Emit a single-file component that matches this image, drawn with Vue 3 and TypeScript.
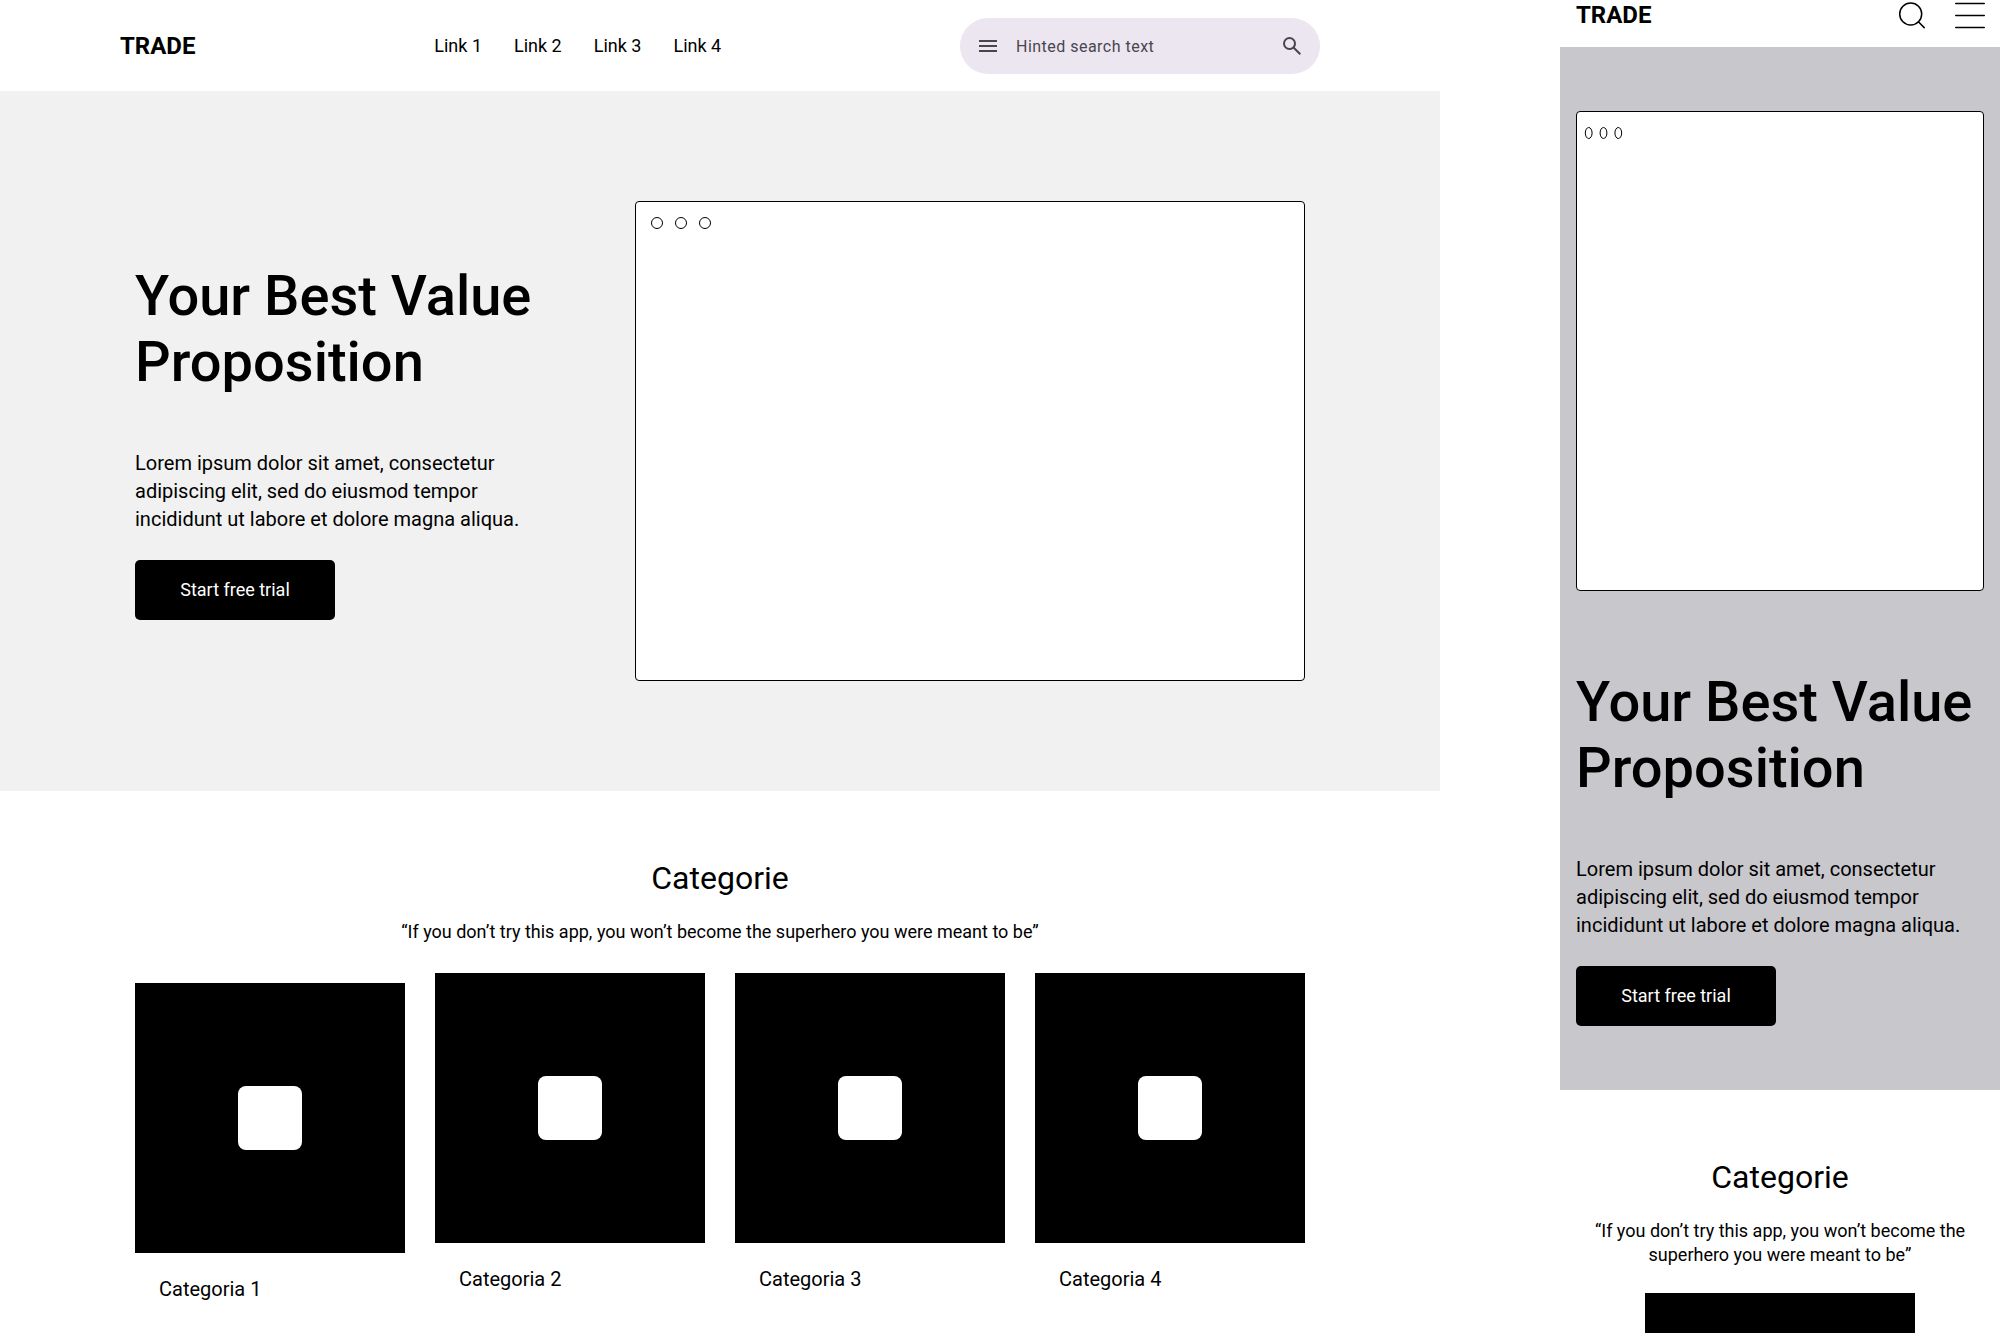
<script setup lang="ts">
interface NavLink {
  label: string
  href: string
}

const links: NavLink[] = [1, 2, 3, 4].map((n) => ({ label: `Link ${n}`, href: `#link-${n}` }))
const categories: string[] = [1, 2, 3, 4].map((n) => `Categoria ${n}`)
const title = 'Your Best Value Proposition'
const lead =
  'Lorem ipsum dolor sit amet, consectetur adipiscing elit, sed do eiusmod tempor incididunt ut labore et dolore magna aliqua.'
const quote = '“If you don’t try this app, you won’t become the superhero you were meant to be”'
</script>

<template>
  <div class="canvas">
    <main class="board desktop">
      <header class="nav">
        <a class="logo" href="#home">TRADE</a>
        <nav class="links">
          <a v-for="link in links" :key="link.label" :href="link.href">{{ link.label }}</a>
        </nav>
        <form class="search" role="search" @submit.prevent>
          <button class="icon-button" type="button" aria-label="Menu">
            <svg width="24" height="24" viewBox="0 0 24 24" fill="currentColor">
              <path d="M3 18h18v-2H3v2zm0-5h18v-2H3v2zm0-7v2h18V6H3z" />
            </svg>
          </button>
          <input type="text" placeholder="Hinted search text" aria-label="Search" />
          <button class="icon-button" type="submit" aria-label="Search">
            <svg width="24" height="24" viewBox="0 0 24 24" fill="currentColor">
              <path
                d="M19.6 21l-6.3-6.3A6.1 6.1 0 0 1 9.5 16 6.5 6.5 0 1 1 16 9.5a6.1 6.1 0 0 1-1.3 3.8l6.3 6.3-1.4 1.4zM9.5 14a4.5 4.5 0 1 0 0-9 4.5 4.5 0 0 0 0 9z"
              />
            </svg>
          </button>
        </form>
      </header>

      <section class="hero">
        <div class="pitch">
          <h1>{{ title }}</h1>
          <p>{{ lead }}</p>
          <button class="cta" type="button">Start free trial</button>
        </div>
        <div class="window">
          <svg class="dots" viewBox="0 0 60 12" preserveAspectRatio="none">
            <circle v-for="cx in [6, 30, 54]" :key="cx" :cx="cx" cy="6" r="5.5" />
          </svg>
        </div>
      </section>

      <section class="categories">
        <h2>Categorie</h2>
        <p class="quote">{{ quote }}</p>
        <ul class="cards">
          <li v-for="name in categories" :key="name" class="card">
            <div class="tile"><span class="chip"></span></div>
            <h3>{{ name }}</h3>
          </li>
        </ul>
      </section>
    </main>

    <aside class="board mobile">
      <header class="nav">
        <a class="logo" href="#home">TRADE</a>
        <div class="actions">
          <button class="icon-button" type="button" aria-label="Search">
            <svg width="30" height="30" viewBox="0 0 30 30" fill="none" stroke="currentColor" stroke-width="1.5">
              <circle cx="13.7" cy="14" r="11" />
              <path d="M21.4 21.8l5.8 5.8" stroke-linecap="round" />
            </svg>
          </button>
          <button class="icon-button" type="button" aria-label="Menu">
            <svg width="30" height="30" viewBox="0 0 30 30" fill="none" stroke="currentColor" stroke-width="1.5">
              <path d="M.75 3.5h28.5M.75 15.5h28.5M.75 27.5h28.5" stroke-linecap="round" />
            </svg>
          </button>
        </div>
      </header>

      <section class="hero">
        <div class="window">
          <svg class="dots" viewBox="0 0 60 12" preserveAspectRatio="none">
            <circle v-for="cx in [6, 30, 54]" :key="cx" :cx="cx" cy="6" r="5.5" />
          </svg>
        </div>
        <div class="pitch">
          <h1>{{ title }}</h1>
          <p>{{ lead }}</p>
          <button class="cta" type="button">Start free trial</button>
        </div>
      </section>

      <section class="categories">
        <h2>Categorie</h2>
        <p class="quote">{{ quote }}</p>
        <div class="tile"><span class="chip"></span></div>
      </section>
    </aside>
  </div>
</template>

<style>
body {
  margin: 0;
  background: #fff;
}
</style>

<style scoped>
.canvas {
  display: grid;
  grid-template-columns: minmax(0, 1fr) 440px;
  gap: 120px;
  height: 100vh;
  overflow: hidden;
  color: #000;
  font-family: Roboto, sans-serif;
  font-size: 18px;
  line-height: 24px;
}
.canvas * {
  box-sizing: border-box;
}
h1,
h2,
h3,
p,
ul {
  margin: 0;
  padding: 0;
  font-weight: 400;
}
a {
  color: inherit;
  text-decoration: none;
}
button {
  padding: 0;
  border: 0;
  font: inherit;
  cursor: pointer;
}
svg {
  display: block;
}
.nav {
  display: flex;
  align-items: center;
  justify-content: space-between;
}
.logo {
  font-size: 24px;
  font-weight: 700;
  line-height: 28px;
}
.icon-button {
  flex: none;
  background: none;
  color: inherit;
}
.hero {
  background: #f1f1f1;
}
.pitch h1 {
  font-size: 56px;
  font-weight: 500;
  line-height: 66px;
}
.pitch p {
  margin: 54px 0 27px;
  font-size: 20px;
  line-height: 28px;
}
.cta {
  display: block;
  width: 200px;
  height: 60px;
  border-radius: 5px;
  background: #000;
  color: #fff;
}
.window {
  height: 480px;
  padding: 15px;
  border: 1px solid #000;
  border-radius: 4px;
  background: #fff;
}
.dots {
  width: 60px;
  height: 12px;
  fill: none;
  stroke: #000;
  overflow: visible;
}
.dots circle {
  vector-effect: non-scaling-stroke;
}
.categories {
  text-align: center;
}
.categories h2 {
  font-size: 32px;
  line-height: 38px;
}
.quote {
  margin-top: 23px;
}
.tile {
  display: flex;
  align-items: center;
  justify-content: center;
  aspect-ratio: 1;
  background: #000;
}
.chip {
  width: 64px;
  height: 64px;
  border-radius: 8px;
  background: #fff;
}

.desktop .nav {
  height: 91px;
  padding: 0 120px;
}
.links {
  display: flex;
  gap: 32px;
}
.search {
  display: flex;
  align-items: center;
  gap: 16px;
  width: 360px;
  height: 56px;
  padding: 0 16px;
  border-radius: 28px;
  background: #ece6f0;
  color: #49454f;
}
.search input {
  flex: 1;
  min-width: 0;
  padding: 2px 0 0;
  border: 0;
  outline: 0;
  background: none;
  color: inherit;
  font: inherit;
  font-size: 16px;
  letter-spacing: 0.03em;
}
.search input::placeholder {
  color: inherit;
  opacity: 1;
}
.desktop .hero {
  display: grid;
  grid-template-columns: 400px minmax(0, 1fr);
  align-items: center;
  gap: 100px;
  height: 700px;
  padding: 0 135px;
}
.desktop .categories {
  padding: 68px 135px 0;
}
.cards {
  display: grid;
  grid-template-columns: repeat(4, minmax(0, 1fr));
  gap: 30px;
  margin-top: 29px;
  list-style: none;
  text-align: left;
}
.card:first-child {
  padding-top: 10px;
}
.card h3 {
  padding: 24px;
  font-size: 20px;
}

.mobile .nav {
  height: 47px;
  padding: 0 15px 17px 16px;
}
.actions {
  display: flex;
  gap: 28px;
}
.mobile .hero {
  padding: 64px 16px;
  background: #c8c7cc;
}
.mobile .window {
  margin-bottom: 78px;
  padding: 15px 8px;
}
.mobile .dots {
  width: 37px;
}
.mobile .categories {
  padding: 68px 16px 0;
}
.mobile .tile {
  width: 270px;
  margin: 26px auto 0;
}
</style>
